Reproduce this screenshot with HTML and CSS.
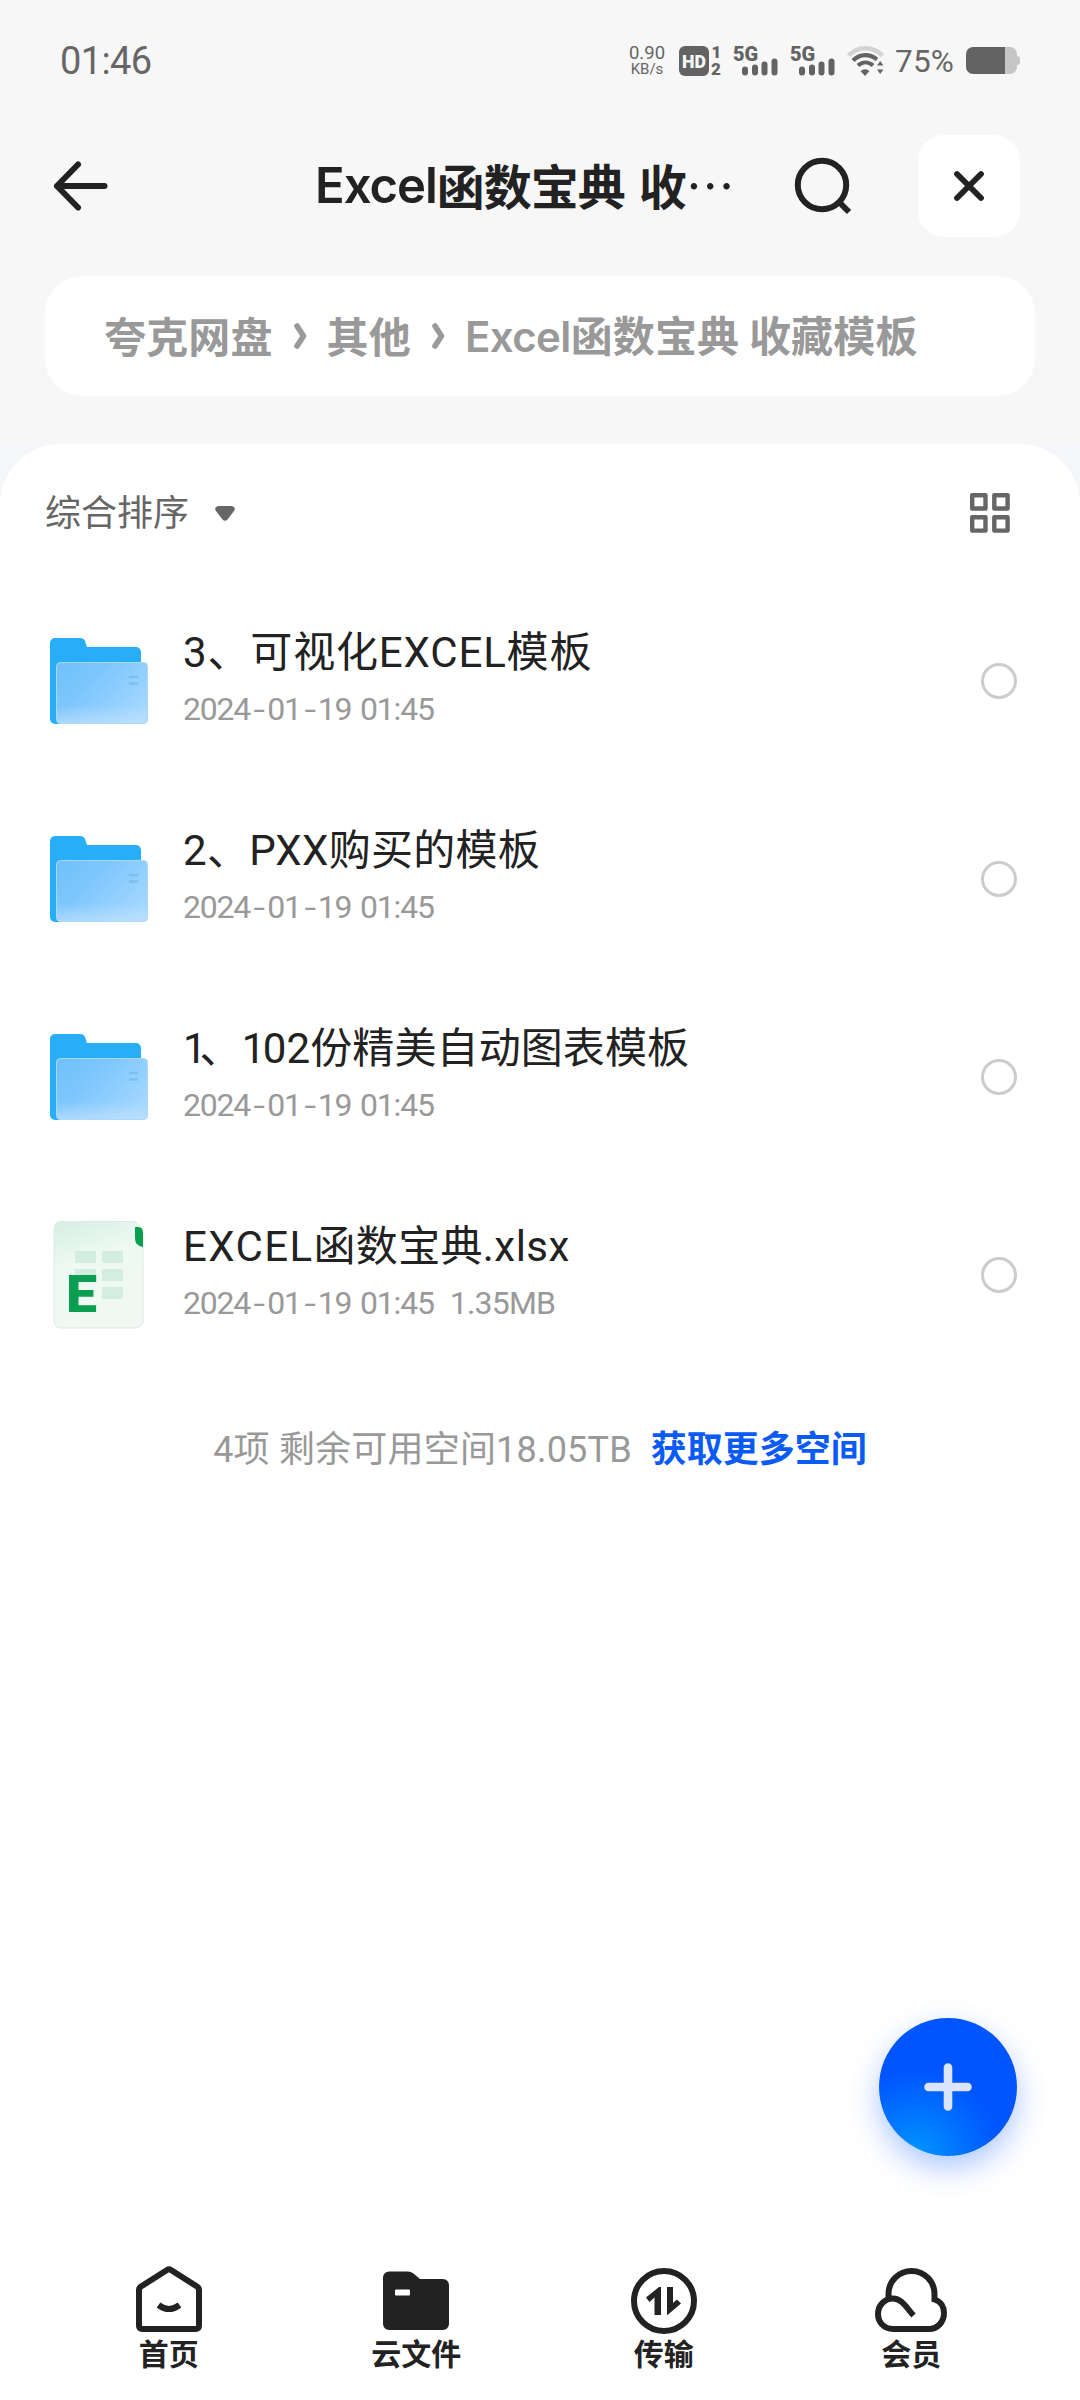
FILE: index.html
```html
<!DOCTYPE html>
<html lang="zh-CN">
<head>
<meta charset="utf-8">
<title>夸克网盘</title>
<link rel="stylesheet" href="styles.css">
</head>
<body>
<svg class="defs" width="0" height="0" aria-hidden="true">
  <defs>
    <linearGradient id="folderFront" x1="0" y1="0.1" x2="1" y2="0.75">
      <stop offset="0" stop-color="#72c1fb"/><stop offset="0.35" stop-color="#7cc6fd"/><stop offset="1" stop-color="#a5d8ff"/>
    </linearGradient>
    <linearGradient id="folderGlow" x1="0" y1="0" x2="0" y2="1">
      <stop offset="0.7" stop-color="#c4e2fc" stop-opacity="0"/><stop offset="1" stop-color="#c4e2fc" stop-opacity="0.65"/>
    </linearGradient>
    <linearGradient id="sheetBg" x1="0.3" y1="0" x2="0.6" y2="1">
      <stop offset="0" stop-color="#d9f1e5"/><stop offset="0.35" stop-color="#eef9f3"/><stop offset="1" stop-color="#f1f8f4"/>
    </linearGradient>
    <symbol id="folder" viewBox="0 0 102 92">
      <path d="M2 8a5 5 0 0 1 5-5h25c3 0 4 1 5 3l2 6h49a5 5 0 0 1 5 5v30H12v42H7a5 5 0 0 1-5-5z" fill="#28aef8"/>
      <rect x="8.500" y="27.500" width="91" height="61" rx="4" fill="url(#folderFront)"/>
      <rect x="8.500" y="27.500" width="91" height="61" rx="4" fill="url(#folderGlow)" stroke="#a9dafd"/>
      <path d="M81 42h9M81 48.500h9" stroke="#7dbfee" stroke-width="2.600"/>
    </symbol>
    <symbol id="signal" viewBox="0 0 46 32">
      <text x="0" y="15.500" class="status-5g">5G</text>
      <path d="M12 24.500v3M22 22.500v5M31.500 19.500v8M41.500 16.500v11" stroke="#636363" stroke-width="6" stroke-linecap="round"/>
    </symbol>
  </defs>
</svg>

<div class="screen">
  <header class="statusbar">
    <span class="clock">01:46</span>
    <div class="status-right">
      <div class="speed"><span class="speed-num">0.90</span><span class="speed-unit">KB/s</span></div>
      <svg class="hd" width="44" height="32" viewBox="0 0 44 32">
        <rect x="0" y="1" width="30" height="30" rx="6" fill="#636363"/>
        <text x="3" y="22.500" class="hd-text" textLength="24" lengthAdjust="spacingAndGlyphs">HD</text>
        <text x="32.500" y="13" class="hd-num">1</text>
        <text x="32" y="30" class="hd-num">2</text>
      </svg>
      <svg class="sig1" width="46" height="32"><use href="#signal"/></svg>
      <svg class="sig2" width="46" height="32"><use href="#signal"/></svg>
      <svg class="wifi" width="38" height="32" viewBox="0 0 38 32" fill="none">
        <path d="M1.500 10.500C11 .800 26 .800 35.500 10.500" stroke="#d3d3d3" stroke-width="4.500"/>
        <path d="M6 15.500C13 8.500 23 8.500 30 14.500M11 20.500C15.500 16.500 21.500 16.500 26 20.500" stroke="#636363" stroke-width="4.200"/>
        <path d="M13.500 26q4.500-3.500 9 0l-4.500 5zM30 20.500l3.200-4.500 3.200 4.500zM30 24.500l3.200 4.500 3.200-4.500z" fill="#636363"/>
      </svg>
      <span class="percent">75%</span>
      <svg class="battery" width="54" height="28" viewBox="0 0 54 28">
        <path d="M7 0h37a7 7 0 0 1 7 7v2q3 0 3 3v3q0 3-3 3v2a7 7 0 0 1-7 7H7z" fill="#c6c6c6"/>
        <path d="M39 0H7a7 7 0 0 0-7 7v13a7 7 0 0 0 7 7h32z" fill="#636363"/>
      </svg>
    </div>
  </header>

  <nav class="titlebar">
    <svg class="back" width="56" height="50" viewBox="0 0 56 50" fill="none" stroke="#222" stroke-width="6" stroke-linecap="round" stroke-linejoin="round">
      <path d="M25 3.500L4 25l21 21.500M4 25h47.500"/>
    </svg>
    <h1 class="title">Excel<span class="title-cjk">函数宝典 收</span><span class="title-more">⋯</span></h1>
    <svg class="search" width="58" height="58" viewBox="0 0 58 58" fill="none" stroke="#222" stroke-width="6">
      <circle cx="28" cy="28" r="24.200"/><path d="M45 45l10 10"/>
    </svg>
    <button class="close" aria-label="关闭">
      <svg width="32" height="32" viewBox="0 0 32 32" fill="none" stroke="#222" stroke-width="5.800" stroke-linecap="round"><path d="M4 4l24 24M28 4L4 28"/></svg>
    </button>
  </nav>

  <div class="crumbs">
    <span class="crumb">夸克网盘</span>
    <svg class="sep" width="13" height="26" viewBox="0 0 13 26"><path d="M3 3l6.500 10L3 23" fill="none" stroke="#999" stroke-width="5.600" stroke-linecap="round" stroke-linejoin="round"/></svg>
    <span class="crumb">其他</span>
    <svg class="sep" width="13" height="26" viewBox="0 0 13 26"><path d="M3 3l6.500 10L3 23" fill="none" stroke="#999" stroke-width="5.600" stroke-linecap="round" stroke-linejoin="round"/></svg>
    <span class="crumb"><span class="crumb-latin">Excel</span>函数宝典 收藏模板</span>
  </div>

  <div class="panel-wrap">
  <main class="panel">
    <div class="toolbar">
      <div class="sort"><span class="sort-label">综合排序</span>
        <svg width="20" height="15" viewBox="0 0 20 15"><path d="M3 0h14q4.500 1.500 2 5l-6.500 8.500q-2.500 2.500-5 0L1 5Q-1.500 1.500 3 0z" fill="#666"/></svg>
      </div>
      <svg width="40" height="40" viewBox="0 0 40 40" fill="none" stroke="#666" stroke-width="4.400" stroke-linejoin="round">
        <path d="M2.200 2.200h13.300v13.300H2.200zM24.300 2.200h13.300v13.300H24.300zM2.200 24.300h13.300v13.300H2.200zM24.300 24.300h13.300v13.300H24.300z"/>
      </svg>
    </div>

    <ul class="files">
      <li class="file">
        <svg class="icon" width="102" height="92"><use href="#folder"/></svg>
        <div class="info"><div class="name wide">3、可视化EXCEL模板</div><div class="meta">2024<i>-</i>01<i>-</i>19 01:45</div></div>
        <span class="check"></span>
      </li>
      <li class="file">
        <svg class="icon" width="102" height="92"><use href="#folder"/></svg>
        <div class="info"><div class="name">2、PXX购买的模板</div><div class="meta">2024<i>-</i>01<i>-</i>19 01:45</div></div>
        <span class="check"></span>
      </li>
      <li class="file">
        <svg class="icon" width="102" height="92"><use href="#folder"/></svg>
        <div class="info"><div class="name tight"><span class="one">1</span>、<span class="one-b">1</span>02份精美自动图表模板</div><div class="meta">2024<i>-</i>01<i>-</i>19 01:45</div></div>
        <span class="check"></span>
      </li>
      <li class="file">
        <svg class="icon" width="102" height="110" viewBox="0 0 102 110">
          <path d="M12 1.500h75l8 8V101a7 7 0 0 1-7 7H13a7 7 0 0 1-7-7V8a6.500 6.500 0 0 1 6-6.500z" fill="url(#sheetBg)" stroke="#dfe8e3"/>
          <path d="M87 7h3q5 0 5 6v14q-8-1-8-9z" fill="#0a9f50"/>
          <path d="M27 31h21v12H27zM54 31h21v12H54zM27 49h21v12H27zM54 49h21v12H54zM54 67h21v12H54z" fill="#d3eee0"/>
          <text x="18" y="91.500" class="sheet-letter" textLength="31" lengthAdjust="spacingAndGlyphs">E</text>
        </svg>
        <div class="info"><div class="name"><span class="latin">EXCEL</span>函数宝典<span class="latin-end">.xlsx</span></div><div class="meta">2024<i>-</i>01<i>-</i>19 01:45<span class="size">1.35MB</span></div></div>
        <span class="check"></span>
      </li>
    </ul>

    <div class="summary"><span class="quota">4项 剩余可用空间18.05TB</span><a class="more">获取更多空间</a></div>
  </main>
  </div>

  <button class="fab" aria-label="新建">
    <svg width="48" height="48" viewBox="0 0 48 48" stroke="#dbe5ff" stroke-width="8.600" stroke-linecap="round"><path d="M24 4.500v39M4.500 24h39"/></svg>
  </button>

  <footer class="tabs">
    <a class="tab">
      <svg width="72" height="68" viewBox="0 0 72 68" fill="none" stroke="#222" stroke-width="6">
        <path d="M8 21.500Q6 22.800 6 25v35.500Q6 64 9.500 64h53q3.500 0 3.500-3.500V25q0-2.200-2-3.500L38 5q-2-1.200-4 0z"/>
        <path d="M25.500 40q10.500 8 21 0"/>
      </svg>
      <span>首页</span>
    </a>
    <a class="tab">
      <svg width="72" height="68" viewBox="0 0 72 68">
        <path d="M3 12.500a6 6 0 0 1 6-6h19q3 0 5.500 2l6.500 5.500h23a6 6 0 0 1 6 6v39a6 6 0 0 1-6 6H9a6 6 0 0 1-6-6z" fill="#222"/>
        <rect x="15" y="24.500" width="15" height="6" rx="1" fill="#fff"/>
      </svg>
      <span>云文件</span>
    </a>
    <a class="tab">
      <svg width="72" height="68" viewBox="0 0 72 68">
        <circle cx="36" cy="36" r="30" fill="none" stroke="#222" stroke-width="6"/>
        <path d="M31 22h2v28h-6.500V32.500L21.500 37 18 32.500zM39 22h6v16l4-3.500 4 4L39.500 50H39z" fill="#222"/>
      </svg>
      <span>传输</span>
    </a>
    <a class="tab">
      <svg width="76" height="68" viewBox="0 0 76 68" fill="none" stroke="#222" stroke-width="6">
        <path d="M15.500 33v-4a23 23 0 0 1 46 0v5.500C68 36.500 71 42 71 48c0 9-6.500 16-15 16H20C11 64 5 57 5 49c0-9 7-15.500 15-15.500 9 0 14 10 20.500 17"/>
      </svg>
      <span>会员</span>
    </a>
  </footer>
</div>
</body>
</html>
```
FILE: styles.css
```css
* { box-sizing: border-box; margin: 0; padding: 0; }
body {
  width: 1080px;
  height: 2400px;
  background: #fff;
  color: #222;
  font-family: Roboto, "Noto Sans CJK SC", sans-serif;
  overflow: hidden;
}
svg { display: block; flex: none; overflow: visible; }
button { border: 0; }
.defs { position: absolute; }

.screen {
  position: relative;
  display: flex;
  flex-direction: column;
  width: 1080px;
  height: 2400px;
  background: #f7f7f7;
}

.statusbar {
  display: flex;
  justify-content: space-between;
  align-items: center;
  height: 120px;
  padding: 2px 60px 0 60px;
  color: #666;
}
.clock { font-size: 38px; letter-spacing: -0.6px; }
.status-right { display: flex; align-items: center; }
.speed { display: flex; flex-direction: column; align-items: center; width: 38px; margin-right: 13px; }
.speed-num { font-size: 18.5px; line-height: 17px; }
.speed-unit { font-size: 15px; line-height: 15px; }
.hd { margin-right: 10px; }
.hd-text { font: 900 18px Roboto, sans-serif; fill: #f7f7f7; }
.hd-num { font: 900 17px Roboto, sans-serif; fill: #636363; }
.status-5g { font: 900 20px Roboto, sans-serif; fill: #636363; }
.sig1, .sig2 { margin-right: 11px; }
.percent { width: 81px; padding-left: 10px; font-size: 31.5px; letter-spacing: 0.2px; }

.titlebar {
  display: flex;
  align-items: center;
  height: 132px;
  padding: 0 59px 0 53px;
}
.title {
  display: flex;
  align-items: center;
  width: 479px;
  margin-left: 206px;
  font: 600 49px/72px Inter, "Noto Sans CJK SC", sans-serif;
  letter-spacing: -1px;
  white-space: nowrap;
}
.title-cjk, .title-more { padding-bottom: 4px; font-family: "Noto Sans CJK SC", sans-serif; font-weight: 700; }
.title-cjk { font-size: 48px; word-spacing: 4px; }
.title-more { font-weight: 400; }
.search { margin-right: 66px; }
.close {
  display: flex;
  align-items: center;
  justify-content: center;
  width: 102px;
  height: 102px;
  border-radius: 26px;
  background: #fff;
}

.crumbs {
  display: flex;
  align-items: center;
  height: 120px;
  margin: 24px 45px 48px;
  padding: 0 0 2px 59px;
  border-radius: 38px;
  background: #fff;
  color: #999;
  font: 700 42px/60px "Noto Sans CJK SC", sans-serif;
  letter-spacing: 0.15px;
}
.crumb-latin { font-family: Inter, sans-serif; font-weight: 600; letter-spacing: -0.6px; }
.sep { margin: 2px 20px 0 21px; }

.panel-wrap { flex: 1; background: #f4f6f9; }
.panel {
  height: 100%;
  border-radius: 60px 60px 0 0;
  background: #fff;
}
.toolbar {
  display: flex;
  justify-content: space-between;
  align-items: center;
  height: 138px;
  padding: 0 70px 0 45px;
}
.sort { display: flex; align-items: center; gap: 26px; font-size: 36px; line-height: 54px; color: #666; }
.sort-label { padding-top: 2px; }

.files { list-style: none; }
.file { display: flex; align-items: center; height: 198px; padding: 0 63px 0 48px; }
.info { flex: 1; margin-left: 33px; padding-bottom: 5px; }
.name { font-size: 42px; line-height: 60px; letter-spacing: 0.3px; white-space: nowrap; }
.wide { letter-spacing: 0.85px; }
.tight { letter-spacing: 0.1px; }
.one { letter-spacing: -7px; }
.one-b { letter-spacing: -2.5px; }
.latin { letter-spacing: 1.4px; }
.latin-end { letter-spacing: 0.5px; }
.meta { margin-top: 1px; font-size: 32px; line-height: 50px; color: #999; letter-spacing: -1.2px; word-spacing: 2px; white-space: pre; }
.meta i { display: inline-block; width: 17px; font-style: normal; text-align: center; transform: scaleX(1.3); }
.size { margin-left: 16px; letter-spacing: -0.8px; }
.check { width: 36px; height: 36px; border: 3px solid #ccc; border-radius: 50%; }
.sheet-letter { font: 900 51px Roboto, sans-serif; fill: #0a9f50; }

.summary { display: flex; align-items: center; justify-content: center; gap: 19px; height: 54px; margin-top: 45px; font-size: 36px; color: #999; }
.quota { letter-spacing: 0.2px; }
.more { color: #0a5af5; font-family: "Noto Sans CJK SC", sans-serif; font-weight: 700; }

.fab {
  position: absolute;
  left: 879px;
  top: 2018px;
  display: flex;
  align-items: center;
  justify-content: center;
  width: 138px;
  height: 138px;
  border-radius: 50%;
  background: radial-gradient(circle at 27% 100%, #0096ff 0, #0078ff 22%, #0055ff 50%);
  box-shadow: 0 12px 30px rgba(0, 85, 255, 0.32);
}

.tabs {
  position: absolute;
  left: 0;
  right: 0;
  bottom: 0;
  display: flex;
  height: 135px;
  padding: 0 45px;
}
.tab { flex: 1; display: flex; flex-direction: column; align-items: center; font: 700 30px/38px "Noto Sans CJK SC", sans-serif; }
```
